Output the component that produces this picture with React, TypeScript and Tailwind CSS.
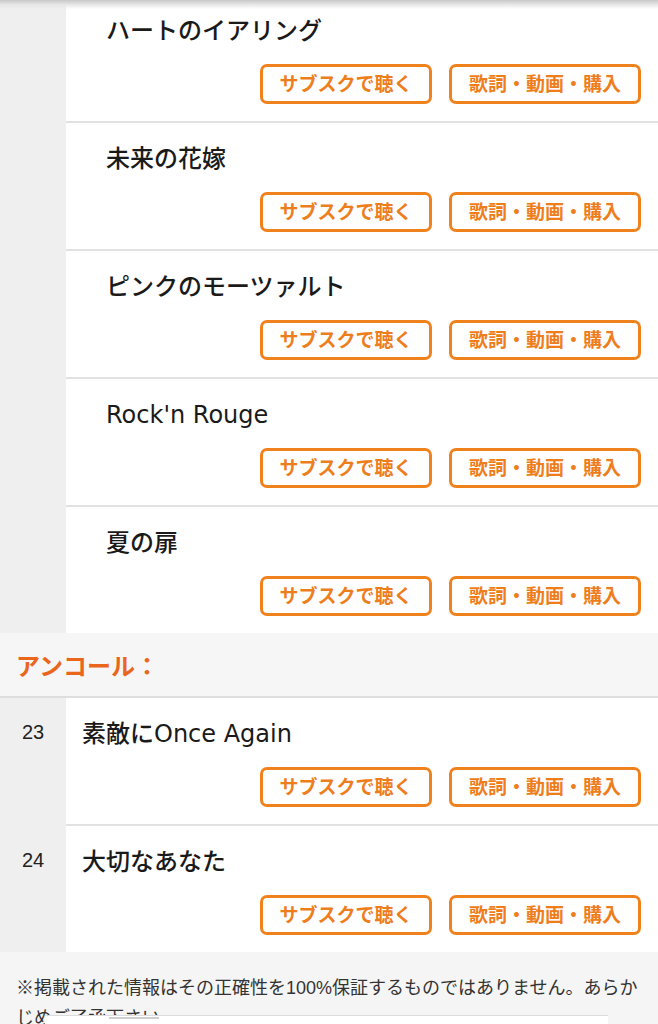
import React from "react";

const font = { fontFamily: '"Liberation Sans", "Noto Sans CJK JP", sans-serif' };
const titleFont = { fontFamily: '"DejaVu Sans", "Noto Sans CJK JP", sans-serif' };

function Buttons() {
  return (
    <div className="flex justify-end gap-[17px] pr-[17px]">
      <button className="h-[40px] w-[172px] rounded-[7px] border-[3px] border-[#f0821e] bg-white text-[19px] font-bold leading-none text-[#ee7d1c]">
        サブスクで聴く
      </button>
      <button className="h-[40px] w-[192px] rounded-[7px] border-[3px] border-[#f0821e] bg-white text-[19px] font-bold leading-none text-[#ee7d1c]">
        歌詞・動画・購入
      </button>
    </div>
  );
}

function Row({
  title,
  num,
  indent,
  last,
  first,
}: {
  title: string;
  num?: string;
  indent: boolean;
  last?: boolean;
  first?: boolean;
}) {
  return (
    <div className="flex">
      <div className="w-[66px] shrink-0 bg-[#efefef] pt-[16px] text-center text-[20px] leading-[36px] text-[#222]">
        {num ?? ""}
      </div>
      <div className={`flex-1 bg-white ${last ? "" : "border-b-2 border-[#e2e2e2]"}`}>
        <div className={`${first ? "pt-[13px]" : "pt-[18px]"} pb-[17px]`}>
          <div
            className={`${indent ? "pl-[40px]" : "pl-[16px]"} text-[24px] font-medium leading-[36px] text-[#1a1a1a]`}
            style={titleFont}
          >
            {title}
          </div>
          <div className="mt-[15px]">
            <Buttons />
          </div>
        </div>
      </div>
    </div>
  );
}

export default function App() {
  return (
    <div className="relative min-h-[1024px] w-[658px] overflow-hidden bg-[#f5f5f5]" style={font}>
      <div className="pointer-events-none absolute left-0 right-0 top-0 z-10 h-[9px] bg-gradient-to-b from-[#c8c8c8] via-[#e6e6e6] to-transparent" />
      <Row title="ハートのイアリング" indent first />
      <Row title="未来の花嫁" indent />
      <Row title="ピンクのモーツァルト" indent />
      <Row title="Rock'n Rouge" indent />
      <Row title="夏の扉" indent last />
      <div className="border-b-2 border-[#dedede] bg-[#f6f6f6] px-[16px] pb-[14px] pt-[19px] text-[24px] font-bold leading-[30px] text-[#ea661c]">
        アンコール：
      </div>
      <Row title="素敵にOnce Again" num="23" indent={false} />
      <Row title="大切なあなた" num="24" indent={false} last />
      <div className="bg-[#f5f5f5] px-[16px] pt-[21px] text-[18px] leading-[30px] text-[#333]">
        ※掲載された情報はその正確性を100%保証するものではありません。あらかじめご了承下さい。
      </div>
      <div className="absolute left-[45px] top-[1015px] h-[12px] w-[563px] border-t border-[#dcdcdc] bg-white">
        <div className="ml-[64px] mt-[1px] h-[2px] w-[50px] bg-[#cfcfcf]" />
      </div>
    </div>
  );
}
